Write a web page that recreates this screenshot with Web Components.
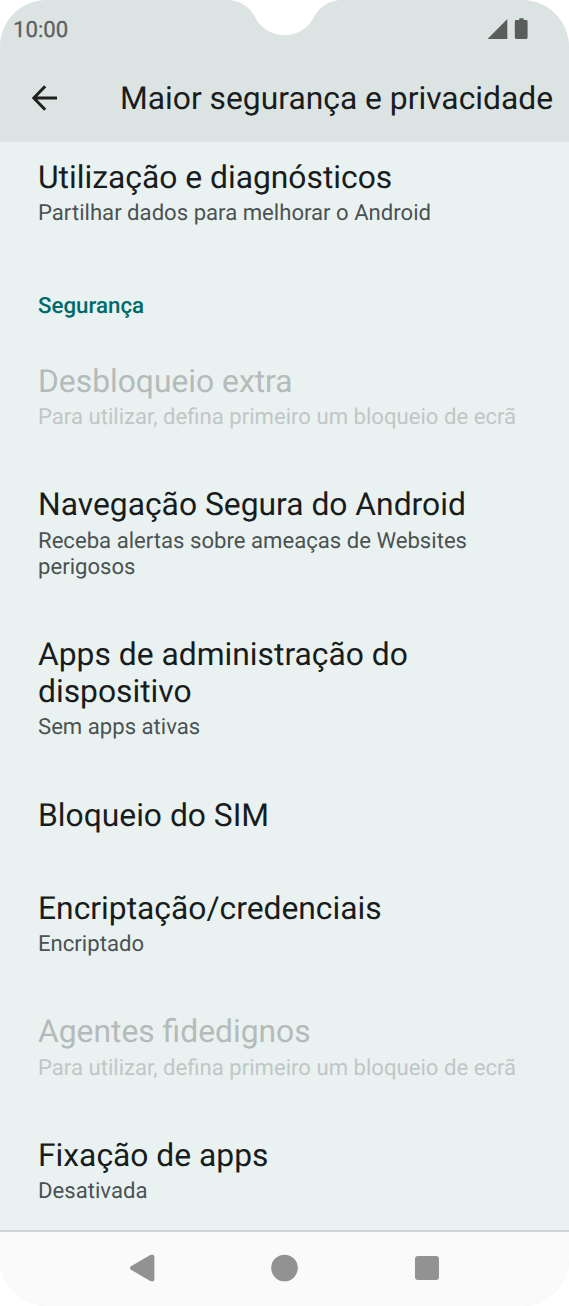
<!DOCTYPE html>
<html lang="pt-PT">
<head>
<meta charset="utf-8">
<meta name="viewport" content="width=device-width, initial-scale=1">
<title>Maior segurança e privacidade</title>
<style>
    body {
        margin: 0;
        background: #fff;
        font-family: Roboto, "Liberation Sans", sans-serif;
        text-rendering: geometricPrecision;
    }
</style>
</head>
<body>
<phone-screen>
    <status-bar slot="top">10:00</status-bar>
    <app-header slot="top">Maior segurança e privacidade</app-header>

    <pref-item summary="Partilhar dados para melhorar o Android">Utilização e diagnósticos</pref-item>
    <pref-category>Segurança</pref-category>
    <pref-item disabled summary="Para utilizar, defina primeiro um bloqueio de ecrã">Desbloqueio extra</pref-item>
    <pref-item summary="Receba alertas sobre ameaças de Websites perigosos">Navegação Segura do Android</pref-item>
    <pref-item summary="Sem apps ativas">Apps de administração do dispositivo</pref-item>
    <pref-item>Bloqueio do SIM</pref-item>
    <pref-item summary="Encriptado">Encriptação/credenciais</pref-item>
    <pref-item disabled summary="Para utilizar, defina primeiro um bloqueio de ecrã">Agentes fidedignos</pref-item>
    <pref-item summary="Desativada">Fixação de apps</pref-item>

    <nav-bar slot="bottom"></nav-bar>
</phone-screen>

<script>
class PhoneScreen extends HTMLElement {

    constructor() {
        super();
        this.shadowDOM = this.attachShadow({mode: "open"});
        this.shadowDOM.innerHTML = `
        <style>
        :host {
            position: relative;
            display: flex;
            flex-direction: column;
            width: 569px;
            height: 1306px;
            border-radius: 47px;
            overflow: hidden;
            background: #e9f2f1;
        }

        .top {
            flex: none;
            background: #dce4e3;
        }

        main {
            flex: 1;
            min-height: 0;
            overflow: hidden;
        }

        /* the list is scrolled a little under the header */
        .list {
            margin-top: -11.6px;
        }

        .notch {
            position: absolute;
            top: 0;
            left: 224px;
        }
        </style>
        <div class="top"><slot name="top"></slot></div>
        <main><div class="list"><slot></slot></div></main>
        <slot name="bottom"></slot>
        <svg class="notch" width="121" height="36" viewBox="0 0 121 36">
            <path fill="#fff" d="M3 0A31 31 0 0 1 31 17A33 33 0 0 0 90 17A31 31 0 0 1 118 0Z"/>
        </svg>`;
    }
}

class StatusBar extends HTMLElement {

    constructor() {
        super();
        this.shadowDOM = this.attachShadow({mode: "open"});
        this.shadowDOM.innerHTML = `
        <style>
        :host {
            display: flex;
            justify-content: space-between;
            align-items: center;
            box-sizing: border-box;
            height: 57px;
            padding: 0 40px 0 13px;
            color: #5c6060;
            font-size: 22.2px;
            -webkit-text-stroke: 0.3px #5c6060;
        }

        span {
            padding-top: 2px;
        }

        svg {
            display: block;
        }
        </style>
        <span><slot></slot></span>
        <svg width="42" height="22" viewBox="0 0 42 22" fill="#5b5d5d">
            <path d="M0.5 21L20.3 1V21Z"/>
            <path d="M32.3 0.3h4.4v1.7h2.5q1.4 0 1.4 1.4v16.2q0 1.4-1.4 1.4h-10q-1.4 0-1.4-1.4V3.4q0-1.4 1.4-1.4h3.1Z"/>
        </svg>`;
    }
}

class AppHeader extends HTMLElement {

    constructor() {
        super();
        this.shadowDOM = this.attachShadow({mode: "open"});
        this.shadowDOM.innerHTML = `
        <style>
        :host {
            display: flex;
            align-items: center;
            box-sizing: border-box;
            height: 85px;
            padding: 0 0 2px 32px;
            color: #191c1c;
        }

        svg {
            display: block;
            flex: none;
            margin: -1px 62px 0 0;
        }

        h1 {
            margin: 0;
            font-size: 31.8px;
            font-weight: 400;
            line-height: 37px;
            white-space: nowrap;
        }
        </style>
        <svg width="26" height="26" viewBox="0 0 26 26" fill="none" stroke="#201f20" stroke-width="3">
            <path d="M25 13H2.5M13.2 1.3L1.8 13L13.2 24.7"/>
        </svg>
        <h1><slot></slot></h1>`;
    }
}

class PrefCategory extends HTMLElement {

    constructor() {
        super();
        this.shadowDOM = this.attachShadow({mode: "open"});
        this.shadowDOM.innerHTML = `
        <style>
        :host {
            display: block;
            padding: 39px 38px 16px;
            color: #006a6a;
            font-size: 22.3px;
            font-weight: 500;
            line-height: 26px;
        }
        </style>
        <slot></slot>`;
    }
}

class PrefItem extends HTMLElement {

    constructor() {
        super();
        this.shadowDOM = this.attachShadow({mode: "open"});
    }

    connectedCallback() {
        this.render();
    }

    render() {
        const summary = this.getAttribute("summary");
        this.shadowDOM.innerHTML = `
        <style>
        :host {
            display: block;
            padding: 28.1px 80px 28px 38px;
            color: #191c1c;
        }

        h2 {
            margin: 0;
            font-size: 31.8px;
            font-weight: 400;
            line-height: 37.1px;
        }

        p {
            margin: 4.3px -30px 0 0;
            padding-right: 30px;
            color: #4b5251;
            font-size: 22.13px;
            line-height: 26px;
        }

        :host([disabled]) h2 {
            color: #b5bbba;
        }

        :host([disabled]) p {
            margin-right: -60px;
            color: #c0c7c6;
        }
        </style>
        <h2><slot></slot></h2>
        ${summary ? `<p>${summary}</p>` : ""}`;
    }
}

class NavBar extends HTMLElement {

    constructor() {
        super();
        this.shadowDOM = this.attachShadow({mode: "open"});
        this.shadowDOM.innerHTML = `
        <style>
        :host {
            display: flex;
            flex: none;
            justify-content: space-between;
            align-items: center;
            box-sizing: border-box;
            height: 76px;
            padding: 0 129px 2px 128.5px;
            border-top: 2px solid #cdd6d5;
            background: #fafafa;
        }

        svg {
            display: block;
            fill: #929292;
        }
        </style>
        <svg width="28" height="28" viewBox="0 0 28 28">
            <path d="M2 12.3L21.2 0.9Q25.4 -0.6 25.4 3V25Q25.4 28.6 21.2 27.1L2 15.7Q0 14 2 12.3Z"/>
        </svg>
        <svg width="28" height="28" viewBox="0 0 28 28">
            <circle cx="14.5" cy="14" r="13.3"/>
        </svg>
        <svg width="28" height="28" viewBox="0 0 28 28">
            <rect x="3" y="2" width="24" height="24" rx="3"/>
        </svg>`;
    }
}

customElements.define("phone-screen", PhoneScreen);
customElements.define("status-bar", StatusBar);
customElements.define("app-header", AppHeader);
customElements.define("pref-category", PrefCategory);
customElements.define("pref-item", PrefItem);
customElements.define("nav-bar", NavBar);
</script>
</body>
</html>
